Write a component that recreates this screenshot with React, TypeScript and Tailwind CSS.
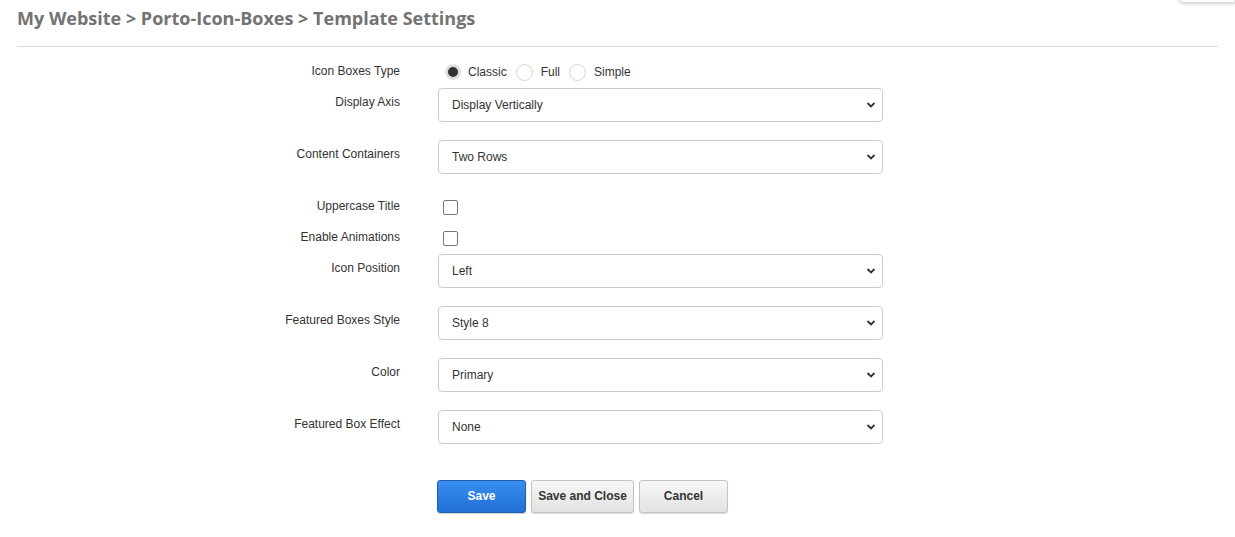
import React from "react"

const labelCls = "w-[400px] shrink-0 text-right text-[12px] leading-[14px] text-[#333]"

function Chevron() {
    return (
        <svg width="10" height="7" viewBox="0 0 10 7" className="absolute right-[4px] top-1/2 -translate-y-1/2 mr-[2px]">
            <path d="M1.5 1.5l3.5 3.5 3.5-3.5" fill="none" stroke="#333" strokeWidth="1.8" />
        </svg>
    )
}

function SelectRow({ label, value, className }: { label: string; value: string; className?: string }) {
    return (
        <div className={"flex " + (className ?? "")}>
            <div className={labelCls + " pt-[7px]"}>{label}</div>
            <div className="ml-[38px] relative w-[445px] h-[34px] rounded-[4px] border border-[#ccc] bg-white flex items-center pl-[13px] text-[12px] text-[#333]">
                {value}
                <Chevron />
            </div>
        </div>
    )
}

function CheckRow({ label, className }: { label: string; className?: string }) {
    return (
        <div className={"flex items-center h-[18px] " + (className ?? "")}>
            <div className={labelCls + " -mt-[3px]"}>{label}</div>
            <span className="ml-[43px] w-[15px] h-[15px] rounded-[2px] border border-[#767676] bg-white" />
        </div>
    )
}

function Radio({ checked, label }: { checked?: boolean; label: string }) {
    return (
        <div className="flex items-center">
            {checked ? (
                <span className="w-[14px] h-[14px] rounded-full bg-[#333] border-[2px] border-[#ddd] ring-1 ring-[#e5e5e5]" />
            ) : (
                <span className="w-[17px] h-[17px] rounded-full bg-white border border-[#d4d4d4]" />
            )}
            <span className="ml-[8px] text-[12px] text-[#333]">{label}</span>
        </div>
    )
}

export default function App() {
    return (
        <div className="relative w-[1235px] h-[537px] bg-white overflow-hidden" style={{ fontFamily: '"Liberation Sans", Arial, sans-serif' }}>
            <div className="absolute right-[0px] top-[-20px] w-[57px] h-[23px] rounded-bl-[6px] border border-[#ddd] bg-white shadow-[0_1px_3px_rgba(0,0,0,0.2)]" />

            {/* Header */}
            <div className="px-[17px]">
                <h1 className="pt-[6px] text-[18px] leading-[24px] font-bold text-[#737373]" style={{ fontFamily: '"Open Sans", sans-serif' }}>
                    My Website &gt; Porto-Icon-Boxes &gt; Template Settings
                </h1>
                <div className="mt-[16px] border-t border-[#dcdcdc]" />
            </div>

            {/* Form */}
            <div className="flex flex-col">
                <div className="mt-[16px] flex items-center h-[18px]">
                    <div className={labelCls + " -mt-[2px]"}>Icon Boxes Type</div>
                    <div className="ml-[46px] flex items-center gap-[9px]">
                        <Radio checked label="Classic" />
                        <Radio label="Full" />
                        <Radio label="Simple" />
                    </div>
                </div>
                <SelectRow className="mt-[7px]" label="Display Axis" value="Display Vertically" />
                <SelectRow className="mt-[18px]" label="Content Containers" value="Two Rows" />
                <CheckRow className="mt-[24px]" label="Uppercase Title" />
                <CheckRow className="mt-[13px]" label="Enable Animations" />
                <SelectRow className="mt-[7px]" label="Icon Position" value="Left" />
                <SelectRow className="mt-[18px]" label="Featured Boxes Style" value="Style 8" />
                <SelectRow className="mt-[18px]" label="Color" value="Primary" />
                <SelectRow className="mt-[18px]" label="Featured Box Effect" value="None" />

                <div className="mt-[36px] ml-[437px] flex gap-[5px]">
                    <button className="w-[89px] h-[33px] pb-[1px] rounded-[3px] border border-[#1d5fae] bg-gradient-to-b from-[#3a8ef0] to-[#1f6fd6] text-white text-[12px] font-bold shadow-[0_1px_1px_rgba(0,0,0,0.2)]">
                        Save
                    </button>
                    <button className="w-[103px] h-[33px] pb-[1px] rounded-[3px] border border-[#c4c4c4] bg-gradient-to-b from-[#f7f7f7] to-[#e2e2e2] text-[#333] text-[12px] font-bold shadow-[0_1px_1px_rgba(0,0,0,0.15)]">
                        Save and Close
                    </button>
                    <button className="w-[89px] h-[33px] pb-[1px] rounded-[3px] border border-[#c4c4c4] bg-gradient-to-b from-[#f7f7f7] to-[#e2e2e2] text-[#333] text-[12px] font-bold shadow-[0_1px_1px_rgba(0,0,0,0.15)]">
                        Cancel
                    </button>
                </div>
            </div>
        </div>
    )
}
